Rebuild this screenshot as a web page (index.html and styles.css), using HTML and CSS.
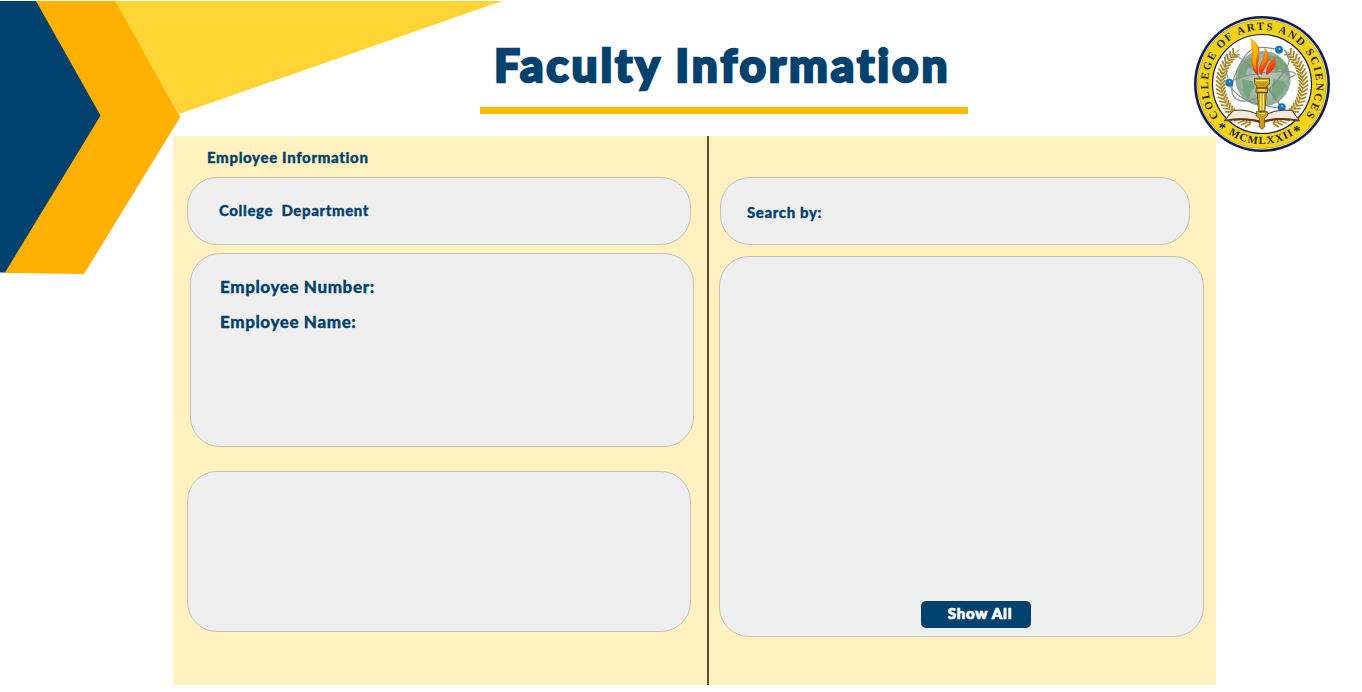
FILE: index.html
```html
<!DOCTYPE html>
<html lang="en">
<head>
<meta charset="utf-8">
<title>Faculty Information</title>
<link rel="stylesheet" href="styles.css">
</head>
<body>
<svg class="corner" viewBox="0 0 510 280" aria-hidden="true">
  <path fill="#ffd535" d="M114 1H502L179 114z"/>
  <path fill="#ffb000" d="M35 1H115L180.300 117L84 274L4 273z"/>
  <path fill="#00426d" d="M0 1H36L100.500 115.500L5 272.500H0z"/>
</svg>
<header class="header"><h1 class="title">Faculty Information</h1></header>
<main class="panel">
  <section class="column column-left">
    <h2 class="heading">Employee Information</h2>
    <div class="card card-college"><span class="label">College&nbsp; Department</span></div>
    <div class="card card-employee">
      <span class="label label-large">Employee Number:</span>
      <span class="label label-large">Employee Name:</span>
    </div>
    <div class="card card-extra"></div>
  </section>
  <div class="divider"></div>
  <section class="column column-right">
    <div class="card card-search"><span class="label">Search by:</span></div>
    <div class="card card-results"><button class="button">Show All</button></div>
  </section>
</main>
<svg class="seal" viewBox="-70 -70 140 140" role="img" aria-label="College of Arts and Sciences seal">
  <defs>
    <path id="ring-top" d="M-43.100 32.500A54 54 0 1 1 43.100 32.500"/>
    <path id="ring-bottom" d="M-52 30A60 60 0 0 0 52 30"/>
    <g id="leaf"><path d="M41 0l5 4.500M41 0l-4.500 4.500" fill="none" stroke="#a9851c" stroke-width="1.700"/></g>
    <g id="leaf2"><use href="#leaf"/><use href="#leaf" transform="rotate(5.200)"/></g>
    <g id="leaf4"><use href="#leaf2"/><use href="#leaf2" transform="rotate(10.400)"/></g>
    <g id="leaf8"><use href="#leaf4"/><use href="#leaf4" transform="rotate(20.800)"/></g>
    <g id="branch"><use href="#leaf8" transform="rotate(106)"/><use href="#leaf8" transform="rotate(147.600)"/><use href="#leaf8" transform="rotate(189.200)"/><path d="M-11 39.500A41 41 0 0 1 -23 -34" fill="none" stroke="#a9851c" stroke-width=".8"/></g>
    <radialGradient id="globe"><stop offset="0" stop-color="#c1d0bf"/><stop offset="1" stop-color="#91aa94"/></radialGradient>
    <linearGradient id="fire" x1="0" y1="0" x2=".5" y2="1"><stop offset="0" stop-color="#ffd21f"/><stop offset=".55" stop-color="#ffae00"/><stop offset="1" stop-color="#f2410c"/></linearGradient>
    <linearGradient id="fire-edge" x1="0" y1="0" x2="0" y2="1"><stop offset="0" stop-color="#ffb000"/><stop offset=".6" stop-color="#f45a0c"/><stop offset="1" stop-color="#e32a0c"/></linearGradient>
  </defs>
  <circle r="68" fill="#101c50"/>
  <circle r="65.400" fill="#f5f2df"/>
  <circle r="64.400" fill="#f4d31b" stroke="#b89515" stroke-width=".7"/>
  <circle r="49.500" fill="#fff" stroke="#17204b" stroke-width="1.200"/>
  <g class="seal-text">
    <text><textPath href="#ring-top" textLength="238">COLLEGE OF ARTS AND SCIENCES</textPath></text>
    <text><textPath href="#ring-bottom" startOffset="27" textLength="69">MCMLXXII</textPath></text>
    <text class="seal-star" x="-43.500" y="49">*</text><text class="seal-star" x="31" y="52">*</text>
  </g>
  <use href="#branch"/><use href="#branch" transform="scale(-1 1)"/>
  <g transform="translate(-47 -53.700) scale(.33333)">
    <circle cx="144" cy="145" r="83" fill="url(#globe)"/>
    <path fill="#78a57e" d="M68 123L84 98L104 82L119 89L109 110L97 116L91 137L78 137L71 150zM81 147L110 152L120 168L106 188L102 207L86 192zM157 76L191 79L216 105L223 142L207 129L196 115L183 126L170 113L177 98L160 92zM176 147L203 151L215 167L199 192L177 209L166 184z"/>
    <g fill="none" stroke="#858c8c" stroke-width="3.500">
      <path d="M183 57C112 40 98 56 67 117C45 168 44 195 67 208C91 220 143 207 187 151C229 99 231 83 207 59"/>
      <path d="M39 144C20 65 32 60 74 82C125 117 161 182 200 230"/>
      <path d="M45 157C75 132 192 119 232 125C249 129 239 139 219 143"/>
      <path d="M44 166C73 211 118 222 191 233"/>
    </g>
    <g fill="#1475b9"><circle cx="192" cy="58" r="12"/><circle cx="43" cy="157" r="12"/><circle cx="200" cy="231" r="12"/></g>
    <g fill="#83d2ef"><circle cx="193" cy="55" r="3"/><circle cx="44" cy="154" r="3"/><circle cx="201" cy="228" r="3"/></g>
    <path fill="url(#fire-edge)" d="M129 134C96 105 118 75 106 23C137 42 136 64 131 87C126 108 132 120 129 134M139 135C116 108 155 91 148 51C167 72 164 92 153 107C147 118 145 124 139 135M155 135C148 110 168 96 180 78C189 111 175 118 155 135"/>
    <path fill="url(#fire)" d="M125 121C102 99 120 70 109 27C131 46 130 64 124 87C120 103 127 111 125 121M138 124C126 105 157 88 150 56C160 76 158 90 147 105C141 113 140 118 138 124M158 127C154 110 170 97 179 83C183 107 170 110 158 127"/>
    <path fill="#f0eadb" stroke="#4c281c" stroke-width="3" d="M56 240Q108 235 140 261Q175 235 231 240L253 271Q177 258 141 274Q101 260 28 271z"/>
    <path fill="none" stroke="#6e341c" stroke-width="6" d="M28 271Q99 260 141 278Q180 258 253 271"/>
    <path fill="#c99b16" stroke="#4c3913" stroke-width="2" d="M118 144H164V160L156 166V173H125V166L118 160zM123 173H158V187H123zM127 187H154L150 244H131zM124 244H157V257L149 264V290L141 297L133 290V264L124 257z"/>
    <path stroke="#fff06a" stroke-width="4" d="M123 151H158M130 179H151M137 190V239M145 190V239M131 250H150"/>
  </g>
</svg>
</body>
</html>
```
FILE: styles.css
```css
* { box-sizing: border-box; }
body {
  margin: 0;
  min-height: 692px;
  background: #fff;
  color: #00406d;
  font-family: Lato, "Open Sans", sans-serif;
  overflow: hidden;
}
.corner { position: absolute; top: 0; left: 0; width: 510px; height: 280px; }
.header { height: 136px; padding: 34px 0 0 480px; }
.title {
  width: 488px;
  height: 80px;
  margin: 0;
  padding-left: 14px;
  border-bottom: 7px solid #f9bd00;
  font-size: 46px;
  line-height: 62px;
  font-weight: 900;
  color: #00426d;
  white-space: nowrap;
  -webkit-text-stroke: 2.4px #00426d;
  stroke-linejoin: round;
  letter-spacing: 2.9px;
}
.panel {
  display: grid;
  grid-template-columns: 534px 2px 507px;
  width: 1043px;
  height: 549px;
  margin-left: 173px;
  background: #fff1c0;
}
.divider { background: #5a5137; }
.column { display: flex; flex-direction: column; align-items: flex-start; }
.column-left { padding-left: 14px; }
.column-right { padding: 41px 0 0 10px; }
.heading {
  height: 41px;
  margin: 0;
  padding: 11px 0 0 20px;
  font-size: 15px;
  line-height: 20px;
  font-weight: 900;
  letter-spacing: .65px;
  white-space: nowrap;
  -webkit-text-stroke: .3px #00406d;
}
.card {
  display: flex;
  flex-direction: column;
  width: 504px;
  border: 1px solid #c4c1b8;
  border-radius: 30px;
  background: #efefef;
}
.card-college { height: 68px; padding: 22px 0 0 31px; }
.card-employee { height: 194px; margin: 8px 0 0 3px; padding: 22px 0 0 29px; gap: 13px; }
.card-extra { height: 161px; margin-top: 24px; }
.card-search { width: 470px; height: 68px; margin-left: 1px; padding: 24px 0 0 26px; }
.card-results { width: 485px; height: 381px; margin-top: 11px; padding: 0 0 8px 201px; justify-content: flex-end; }
.label {
  font-size: 15px;
  line-height: 20px;
  font-weight: 900;
  letter-spacing: .6px;
  white-space: nowrap;
  -webkit-text-stroke: .3px #00406d;
}
.label-large { font-size: 17px; line-height: 22px; }
.button {
  width: 110px;
  height: 27px;
  padding: 0 0 2px 8px;
  border: 0;
  border-radius: 5px;
  background: #00426d;
  color: #fff;
  font: 900 15px/25px Lato, sans-serif;
  letter-spacing: .8px;
  -webkit-text-stroke: .7px #fff;
}
.seal { position: absolute; left: 1192px; top: 13.5px; width: 140px; height: 140px; }
.seal-text { fill: #242832; font: bold 11px "Liberation Serif", serif; }
.seal-star { font-size: 15px; }
```
